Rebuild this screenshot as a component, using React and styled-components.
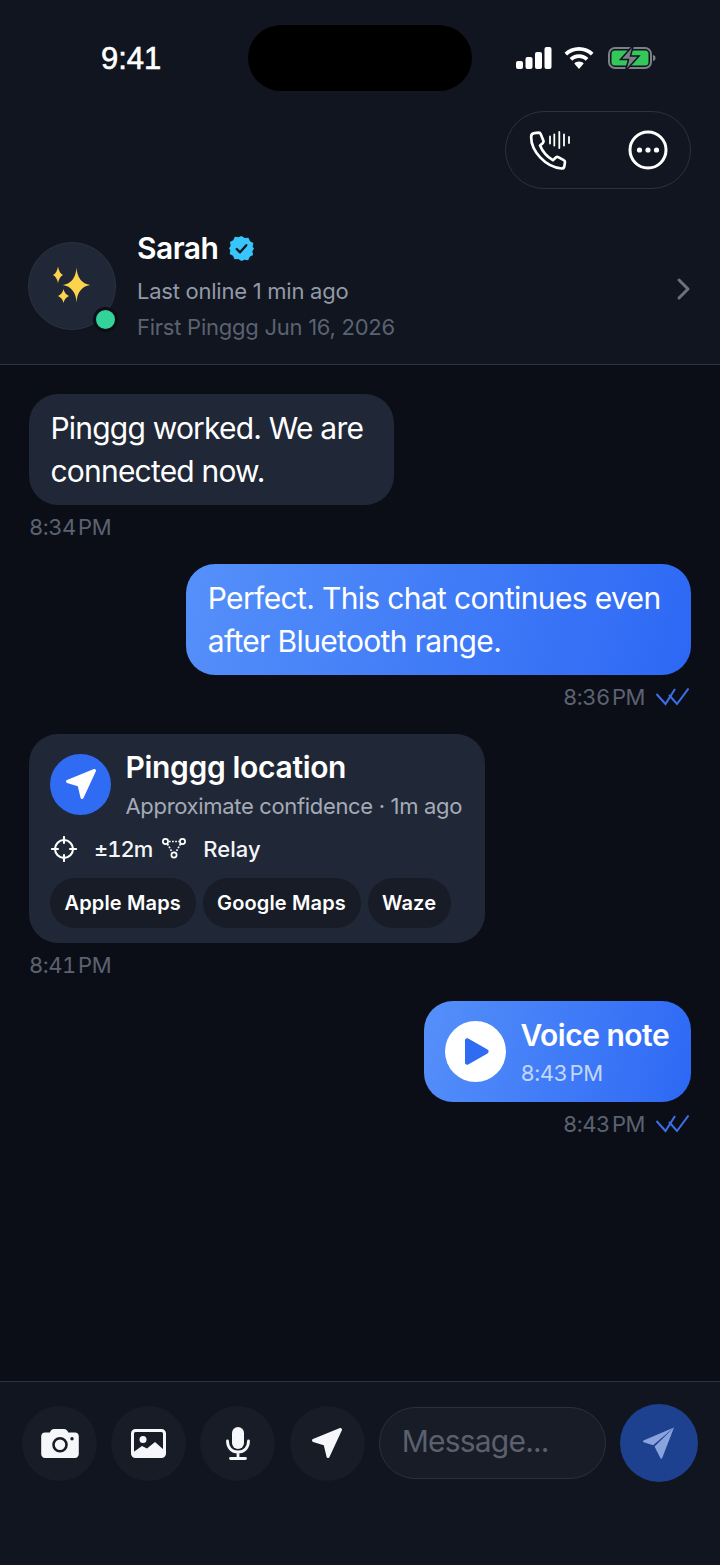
import styled, { createGlobalStyle } from "styled-components";

const GlobalStyle = createGlobalStyle`
  html, body {
    margin: 0;
    padding: 0;
    background: #0b0e16;
  }
  * {
    box-sizing: border-box;
  }
`;

const Page = styled.div`
  width: 720px;
  height: 1565px;
  display: flex;
  flex-direction: column;
  overflow: hidden;
  background: #0b0e16;
  color: #fff;
  font-family: Inter, "Noto Sans", sans-serif;
`;

const Header = styled.header`
  height: 365px;
  flex: none;
  background: #10151f;
  border-bottom: 1.5px solid #2c3240;
  padding: 25px 29px 0 28px;
`;

const StatusBar = styled.div`
  height: 66px;
  display: flex;
  align-items: center;
`;

const Clock = styled.div`
  width: 220px;
  padding: 2px 0 0 73px;
  font-family: "Liberation Sans", sans-serif;
  font-size: 31px;
  -webkit-text-stroke: 0.6px #fff;
`;

const Island = styled.div`
  width: 224px;
  height: 66px;
  border-radius: 33px;
  background: #000;
`;

const StatusIcons = styled.div`
  margin-left: 44px;
  display: flex;
  align-items: center;
  gap: 12px;
`;

const ActionRow = styled.div`
  margin-top: 20px;
  display: flex;
  justify-content: flex-end;
`;

const ActionPill = styled.div`
  width: 186px;
  height: 78px;
  padding: 0 22px 0 23px;
  border: 1.5px solid #2d323e;
  border-radius: 39px;
  background: #111620;
  display: flex;
  align-items: center;
  justify-content: space-between;
`;

const Profile = styled.div`
  margin-top: 38px;
  display: flex;
  align-items: flex-start;
`;

const Avatar = styled.div`
  position: relative;
  flex: none;
  width: 88px;
  height: 88px;
  margin-top: 15px;
  border: 1.5px solid #2b3240;
  border-radius: 50%;
  background: #202736;
  display: flex;
  align-items: center;
  justify-content: center;
`;

const OnlineDot = styled.span`
  position: absolute;
  right: -3px;
  bottom: -3px;
  width: 25px;
  height: 25px;
  border: 3px solid #0b0e16;
  border-radius: 50%;
  background: #34d399;
`;

const ProfileText = styled.div`
  flex: 1;
  margin-left: 21px;
`;

const NameRow = styled.div`
  height: 42px;
  display: flex;
  align-items: center;
  gap: 11px;
  font-size: 30px;
  font-weight: 600;
  letter-spacing: -0.5px;
`;

const ProfileLine = styled.div`
  margin-top: ${(p) => p.$top}px;
  font-size: 22px;
  line-height: 30px;
  letter-spacing: -0.25px;
  color: ${(p) => p.$color};
`;

const Chevron = styled.div`
  align-self: center;
  margin: 12px -1px 0 0;
`;

const Thread = styled.main`
  flex: 1;
  padding: 29px 29px 0 29px;
  display: flex;
  flex-direction: column;
`;

const Bubble = styled.div`
  border-radius: 29px;
  padding: 12.5px 30.5px 12.5px 21.5px;
  font-size: 30px;
  line-height: 43px;
  letter-spacing: ${(p) => (p.$mine ? "-0.65px" : "-0.8px")};
  background: ${(p) =>
    p.$mine ? "linear-gradient(105deg, #5590fa 0%, #2d68f5 100%)" : "#202736"};
  align-self: ${(p) => (p.$mine ? "flex-end" : "flex-start")};
`;

const Meta = styled.div`
  height: 30px;
  margin: 7px 0 ${(p) => p.$gap}px 0;
  padding-right: ${(p) => (p.$mine ? 2 : 0)}px;
  display: flex;
  align-items: center;
  justify-content: ${(p) => (p.$mine ? "flex-end" : "flex-start")};
  gap: 11px;
  font-size: 22px;
  font-variant-numeric: tabular-nums;
  letter-spacing: -0.5px;
  word-spacing: -3px;
  color: #5b6271;
`;

const LocationCard = styled.div`
  align-self: flex-start;
  width: 456px;
  height: 209px;
  padding: 20px 22px 0 21px;
  border-radius: 29px;
  background: #202736;
`;

const CardTop = styled.div`
  display: flex;
  gap: 14.5px;
`;

const RoundBlue = styled.div`
  flex: none;
  width: 61px;
  height: 61px;
  border-radius: 50%;
  background: #2f6bf3;
  display: flex;
  align-items: center;
  justify-content: center;
`;

const CardTitle = styled.div`
  margin-top: -6px;
  font-size: 30px;
  line-height: 38px;
  font-weight: 600;
  letter-spacing: -0.33px;
`;

const CardSub = styled.div`
  margin-top: 6px;
  font-size: 22px;
  line-height: 28px;
  white-space: nowrap;
  letter-spacing: -0.33px;
  color: #a4abb8;
`;

const CardStats = styled.div`
  margin-top: 13px;
  padding-left: 1px;
  height: 32px;
  display: flex;
  align-items: center;
  font-size: 22px;
  font-weight: 500;
  font-variant-numeric: tabular-nums;
  color: #f3f5f9;
`;

const Stat = styled.span`
  margin-left: ${(p) => p.$left}px;
  display: flex;
`;

const Accuracy = styled(Stat)`
  letter-spacing: -1px;
`;

const Chips = styled.div`
  margin-top: 13px;
  display: flex;
  gap: 7px;
`;

const Chip = styled.div`
  height: 50px;
  padding: 0 14.5px;
  border-radius: 25px;
  background: #171c27;
  display: flex;
  align-items: center;
  font-size: 20px;
  font-weight: 600;
  letter-spacing: 0.15px;
`;

const VoiceBubble = styled.div`
  align-self: flex-end;
  width: 267px;
  height: 101px;
  padding: 0 21px;
  border-radius: 29px;
  background: linear-gradient(105deg, #5590fa 0%, #2d68f5 100%);
  display: flex;
  align-items: center;
  gap: 14.5px;
`;

const PlayCircle = styled.div`
  flex: none;
  width: 61px;
  height: 61px;
  padding-left: 3px;
  border-radius: 50%;
  background: #fff;
  display: flex;
  align-items: center;
  justify-content: center;
`;

const VoiceText = styled.div`
  white-space: nowrap;
`;

const VoiceTitle = styled.div`
  margin-top: -2px;
  font-size: 30px;
  line-height: 38px;
  font-weight: 600;
  letter-spacing: -0.5px;
`;

const VoiceTime = styled.div`
  margin-top: 6px;
  font-size: 22px;
  line-height: 26px;
  font-variant-numeric: tabular-nums;
  letter-spacing: -0.5px;
  word-spacing: -3px;
  color: #c2d6fb;
`;

const Composer = styled.footer`
  height: 184px;
  flex: none;
  background: #10151f;
  border-top: 1.5px solid #2c3240;
  padding: 21.5px 22px 0 22px;
  display: flex;
  align-items: flex-start;
`;

const ToolButton = styled.div`
  flex: none;
  width: 75px;
  height: 75px;
  margin: 2px 14.2px 0 0;
  border-radius: 50%;
  background: #171c27;
  display: flex;
  align-items: center;
  justify-content: center;
`;

const MessageInput = styled.div`
  flex: none;
  width: 227px;
  height: 72px;
  margin: 3.5px 14px 0 0;
  padding: 0 22px 4px 22px;
  border: 1.5px solid #2b303c;
  border-radius: 36px;
  background: #171c27;
  display: flex;
  align-items: center;
  font-size: 30px;
  letter-spacing: -0.8px;
  color: #5a606d;
`;

const SendButton = styled.div`
  flex: none;
  width: 78px;
  height: 78px;
  border-radius: 50%;
  background: #1e418f;
  display: flex;
  align-items: center;
  justify-content: center;
`;

const Arrow = ({ color = "#fff" }) => (
  <svg width="32" height="32" viewBox="0 0 32 32" fill={color} stroke={color} strokeWidth="3" strokeLinejoin="round">
    <path d="M29.500 2.500 2.500 13.500l11.500 3.500L17 29.500Z" />
  </svg>
);

const DoubleCheck = () => (
  <svg width="33" height="18" viewBox="0 0 33 18" fill="none" stroke="#3b70e8" strokeWidth="2">
    <path d="M.5 6l9 10L19 1" />
    <path d="M13 7l8 9L32.500.5" />
  </svg>
);

const CallIcon = () => (
  <svg width="42" height="42" viewBox="0 0 42 42" fill="none" stroke="#fff" strokeWidth="2.500" strokeLinecap="round" strokeLinejoin="round">
    <path
      transform="translate(0 1.500) scale(1.070)"
      d="M5 2.500 9 2c1 0 1.600.5 2 1.500l2.500 6c.3.900.1 1.600-.5 2.200l-2.700 2.300c2.300 5.500 6.500 10.500 12 13.700l2.800-2.500c.7-.6 1.400-.7 2.200-.3l5.200 2.800c.9.500 1.300 1.200 1.100 2.200l-.6 3.600c-.3 1.300-1.100 2-2.500 2C15 34 2 19 2 6c0-2 1.300-3.300 3-3.500Z"
    />
    <path strokeWidth="1.800" d="M21 7.500v7M25.300 5.500v11M30.300 3v16M35 5.500v11M40 8v6" />
  </svg>
);

const MoreIcon = () => (
  <svg width="40" height="40" viewBox="0 0 40 40">
    <circle cx="20" cy="20" r="18" fill="none" stroke="#fff" strokeWidth="3" />
    <circle cx="11.500" cy="20" r="2.600" fill="#fff" />
    <circle cx="20" cy="20" r="2.600" fill="#fff" />
    <circle cx="28.500" cy="20" r="2.600" fill="#fff" />
  </svg>
);

const SignalIcon = () => (
  <svg width="36" height="22" viewBox="0 0 36 22" fill="#fff">
    <rect x="0" y="14" width="7" height="8" rx="2" />
    <rect x="9.500" y="10" width="7" height="12" rx="2" />
    <rect x="19" y="5" width="7" height="17" rx="2" />
    <rect x="28.500" y="0" width="7" height="22" rx="2" />
  </svg>
);

const WifiIcon = () => (
  <svg width="30" height="22" viewBox="0 0 30 22" fill="#fff">
    <path d="M15 0C9.300 0 4.200 2.200.5 5.800l2.600 2.800C6.200 5.600 10.400 3.800 15 3.800s8.800 1.800 11.900 4.800l2.600-2.800C25.800 2.200 20.700 0 15 0Z" />
    <path d="M15 7.300c-3.700 0-7 1.400-9.400 3.700l2.700 2.800c1.700-1.600 4.100-2.700 6.700-2.700s5 1 6.700 2.700l2.700-2.800C22 8.700 18.700 7.300 15 7.300Z" />
    <path d="M15 14.500c-1.900 0-3.500.7-4.700 1.900L15 22l4.700-5.600c-1.200-1.200-2.800-1.900-4.700-1.900Z" />
  </svg>
);

const BatteryIcon = () => (
  <svg width="51" height="26" viewBox="-2 0 51 26">
    <rect x="1" y="3" width="42" height="20" rx="6" fill="none" stroke="#7d8088" strokeWidth="2" />
    <rect x="3.500" y="5.500" width="37" height="15" rx="3.500" fill="#34c759" />
    <path d="M45 10c2 .4 2.500 1.500 2.500 3s-.5 2.600-2.500 3Z" fill="#7d8088" />
    <path d="M25.500 0 12.500 14.500h8L17.500 26l13.500-15h-8.500Z" fill="#7d8088" stroke="#10151f" strokeWidth="1.500" />
  </svg>
);

const VerifiedIcon = () => (
  <svg width="25" height="25" viewBox="0 0 26 26">
    <path fill="#38c6fa" d="M13 0l3.300 2.200 3.900-.4 1.700 3.600 3.400 1.900-.7 3.900L26 13l-1.700 2.800.7 3.900-3.400 1.900-1.700 3.600-3.900-.4L13 26l-3.300-2.200-3.900.4-1.700-3.600-3.400-1.900.7-3.900L0 13l1.700-2.800-.7-3.900 3.400-1.900 1.700-3.600 3.900.4Z" />
    <path d="M8 13.500l3.500 3.500L18 9.500" fill="none" stroke="#10151f" strokeWidth="2.400" strokeLinecap="round" strokeLinejoin="round" />
  </svg>
);

// four pointed sparkle with thin arms
const Star = ({ x, y, rx, ry }) => (
  <path
    fill="#fcd34d"
    d={`M${x} ${y - ry}Q${x + 1} ${y - 2} ${x + rx} ${y}Q${x + 1} ${y + 2} ${x} ${y + ry}Q${x - 1} ${y + 2} ${x - rx} ${y}Q${x - 1} ${y - 2} ${x} ${y - ry}Z`}
  />
);

const SparklesIcon = () => (
  <svg width="44" height="44" viewBox="0 0 44 44">
    <Star x={8} y={11} rx={5} ry={8.500} />
    <Star x={26.500} y={21} rx={13.700} ry={17.500} />
    <Star x={13.500} y={32} rx={5.500} ry={7} />
  </svg>
);

const TargetIcon = () => (
  <svg width="26" height="26" viewBox="0 0 26 26" fill="none" stroke="#fff" strokeWidth="2.100" strokeLinecap="round">
    <circle cx="13" cy="13" r="9" />
    <path d="M13 1v6M13 19v6M1 13h6M19 13h6" />
  </svg>
);

const RelayIcon = () => (
  <svg width="24" height="21" viewBox="0 0 24 21" fill="none" stroke="#fff" strokeWidth="1.700">
    <circle cx="3.500" cy="3.500" r="2.600" />
    <circle cx="20.500" cy="3.500" r="2.600" />
    <circle cx="12" cy="17" r="2.600" />
    <path strokeDasharray="1.700 1.400" d="M7 3.500h10M5.500 6l4.500 8M18.500 6l-4.500 8" />
  </svg>
);

const PlayIcon = () => (
  <svg width="24" height="27" viewBox="0 0 24 27" fill="#2f6bf3">
    <path d="M0 2.500v22c0 1.800 1.700 2.800 3.200 1.900l19.300-11c1.500-.9 1.500-3 0-3.800L3.200.6C1.700-.3 0 .7 0 2.500Z" />
  </svg>
);

const CameraIcon = () => (
  <svg width="38" height="29" viewBox="0 0 38 29">
    <path fill="#f5f7fb" d="M9 3.500C9.600 1.300 11 0 13 0h10c2 0 3.500 1.300 4.200 3.500H34c2.200 0 3.800 1.500 3.800 3.800V25c0 2.300-1.600 4-3.800 4H4c-2.200 0-3.800-1.700-3.800-4V7.300C.2 5 1.800 3.500 4 3.500Z" />
    <circle cx="19" cy="15.700" r="6.500" fill="none" stroke="#171c27" strokeWidth="2.600" />
    <circle cx="31" cy="9.700" r="1.700" fill="#171c27" />
  </svg>
);

const GalleryIcon = () => (
  <svg width="35" height="29" viewBox="0 0 35 29">
    <rect x="1.500" y="1.500" width="32" height="26" rx="3" fill="none" stroke="#f5f7fb" strokeWidth="3" />
    <circle cx="12" cy="10.500" r="3.500" fill="#f5f7fb" />
    <path fill="#f5f7fb" d="M2.500 23l8.500-6 5 2.500 8-6.500 9 8v6h-30.500Z" />
  </svg>
);

const MicIcon = () => (
  <svg width="24" height="33" viewBox="0 0 24 33">
    <rect x="6" y="0" width="12" height="22" rx="6" fill="#f5f7fb" />
    <path d="M1.500 14c0 6.500 4 11 10.500 11s10.500-4.500 10.500-11M12 25v6.500M4.500 31.500h15" fill="none" stroke="#f5f7fb" strokeWidth="2.800" strokeLinecap="round" />
  </svg>
);

const SendIcon = () => (
  <svg width="34" height="34" viewBox="0 0 34 34">
    <path fill="#89a3dc" d="M32 1.500 1.500 14.600c-.8.400-.7 1.400.1 1.700l9.500 3Z" />
    <path fill="#89a3dc" d="M32 1.500 12.500 20.500l6 11.800c.4.800 1.400.7 1.700-.2Z" />
  </svg>
);

const App = () => {
  return (
    <Page>
      <GlobalStyle />
      <Header>
        <StatusBar>
          <Clock>9:41</Clock>
          <Island />
          <StatusIcons>
            <SignalIcon />
            <WifiIcon />
            <BatteryIcon />
          </StatusIcons>
        </StatusBar>
        <ActionRow>
          <ActionPill>
            <CallIcon />
            <MoreIcon />
          </ActionPill>
        </ActionRow>
        <Profile>
          <Avatar>
            <SparklesIcon />
            <OnlineDot />
          </Avatar>
          <ProfileText>
            <NameRow>
              Sarah
              <VerifiedIcon />
            </NameRow>
            <ProfileLine $top={7} $color="#9299a7">
              Last online 1 min ago
            </ProfileLine>
            <ProfileLine $top={6} $color="#5b6271">
              First Pinggg Jun 16, 2026
            </ProfileLine>
          </ProfileText>
          <Chevron>
            <svg width="16" height="24" viewBox="0 0 16 24" fill="none" stroke="#6a7180" strokeWidth="3" strokeLinecap="round" strokeLinejoin="round">
              <path d="M3 3l9 9-9 9" />
            </svg>
          </Chevron>
        </Profile>
      </Header>

      <Thread>
        <Bubble>
          Pinggg worked. We are
          <br />
          connected now.
        </Bubble>
        <Meta $gap={22}>8:34 PM</Meta>
        <Bubble $mine>
          Perfect. This chat continues even
          <br />
          after Bluetooth range.
        </Bubble>
        <Meta $mine $gap={21.5}>
          8:36 PM
          <DoubleCheck />
        </Meta>
        <LocationCard>
          <CardTop>
            <RoundBlue>
              <Arrow />
            </RoundBlue>
            <div>
              <CardTitle>Pinggg location</CardTitle>
              <CardSub>Approximate confidence · 1m ago</CardSub>
            </div>
          </CardTop>
          <CardStats>
            <TargetIcon />
            <Accuracy $left={17}>±12m</Accuracy>
            <Stat $left={10}>
              <RelayIcon />
            </Stat>
            <Stat $left={17}>Relay</Stat>
          </CardStats>
          <Chips>
            <Chip>Apple Maps</Chip>
            <Chip>Google Maps</Chip>
            <Chip>Waze</Chip>
          </Chips>
        </LocationCard>
        <Meta $gap={21.5}>8:41 PM</Meta>
        <VoiceBubble>
          <PlayCircle>
            <PlayIcon />
          </PlayCircle>
          <VoiceText>
            <VoiceTitle>Voice note</VoiceTitle>
            <VoiceTime>8:43 PM</VoiceTime>
          </VoiceText>
        </VoiceBubble>
        <Meta $mine $gap={0}>
          8:43 PM
          <DoubleCheck />
        </Meta>
      </Thread>

      <Composer>
        <ToolButton>
          <CameraIcon />
        </ToolButton>
        <ToolButton>
          <GalleryIcon />
        </ToolButton>
        <ToolButton>
          <MicIcon />
        </ToolButton>
        <ToolButton>
          <Arrow color="#f5f7fb" />
        </ToolButton>
        <MessageInput>Message...</MessageInput>
        <SendButton>
          <SendIcon />
        </SendButton>
      </Composer>
    </Page>
  );
};

export default App;
